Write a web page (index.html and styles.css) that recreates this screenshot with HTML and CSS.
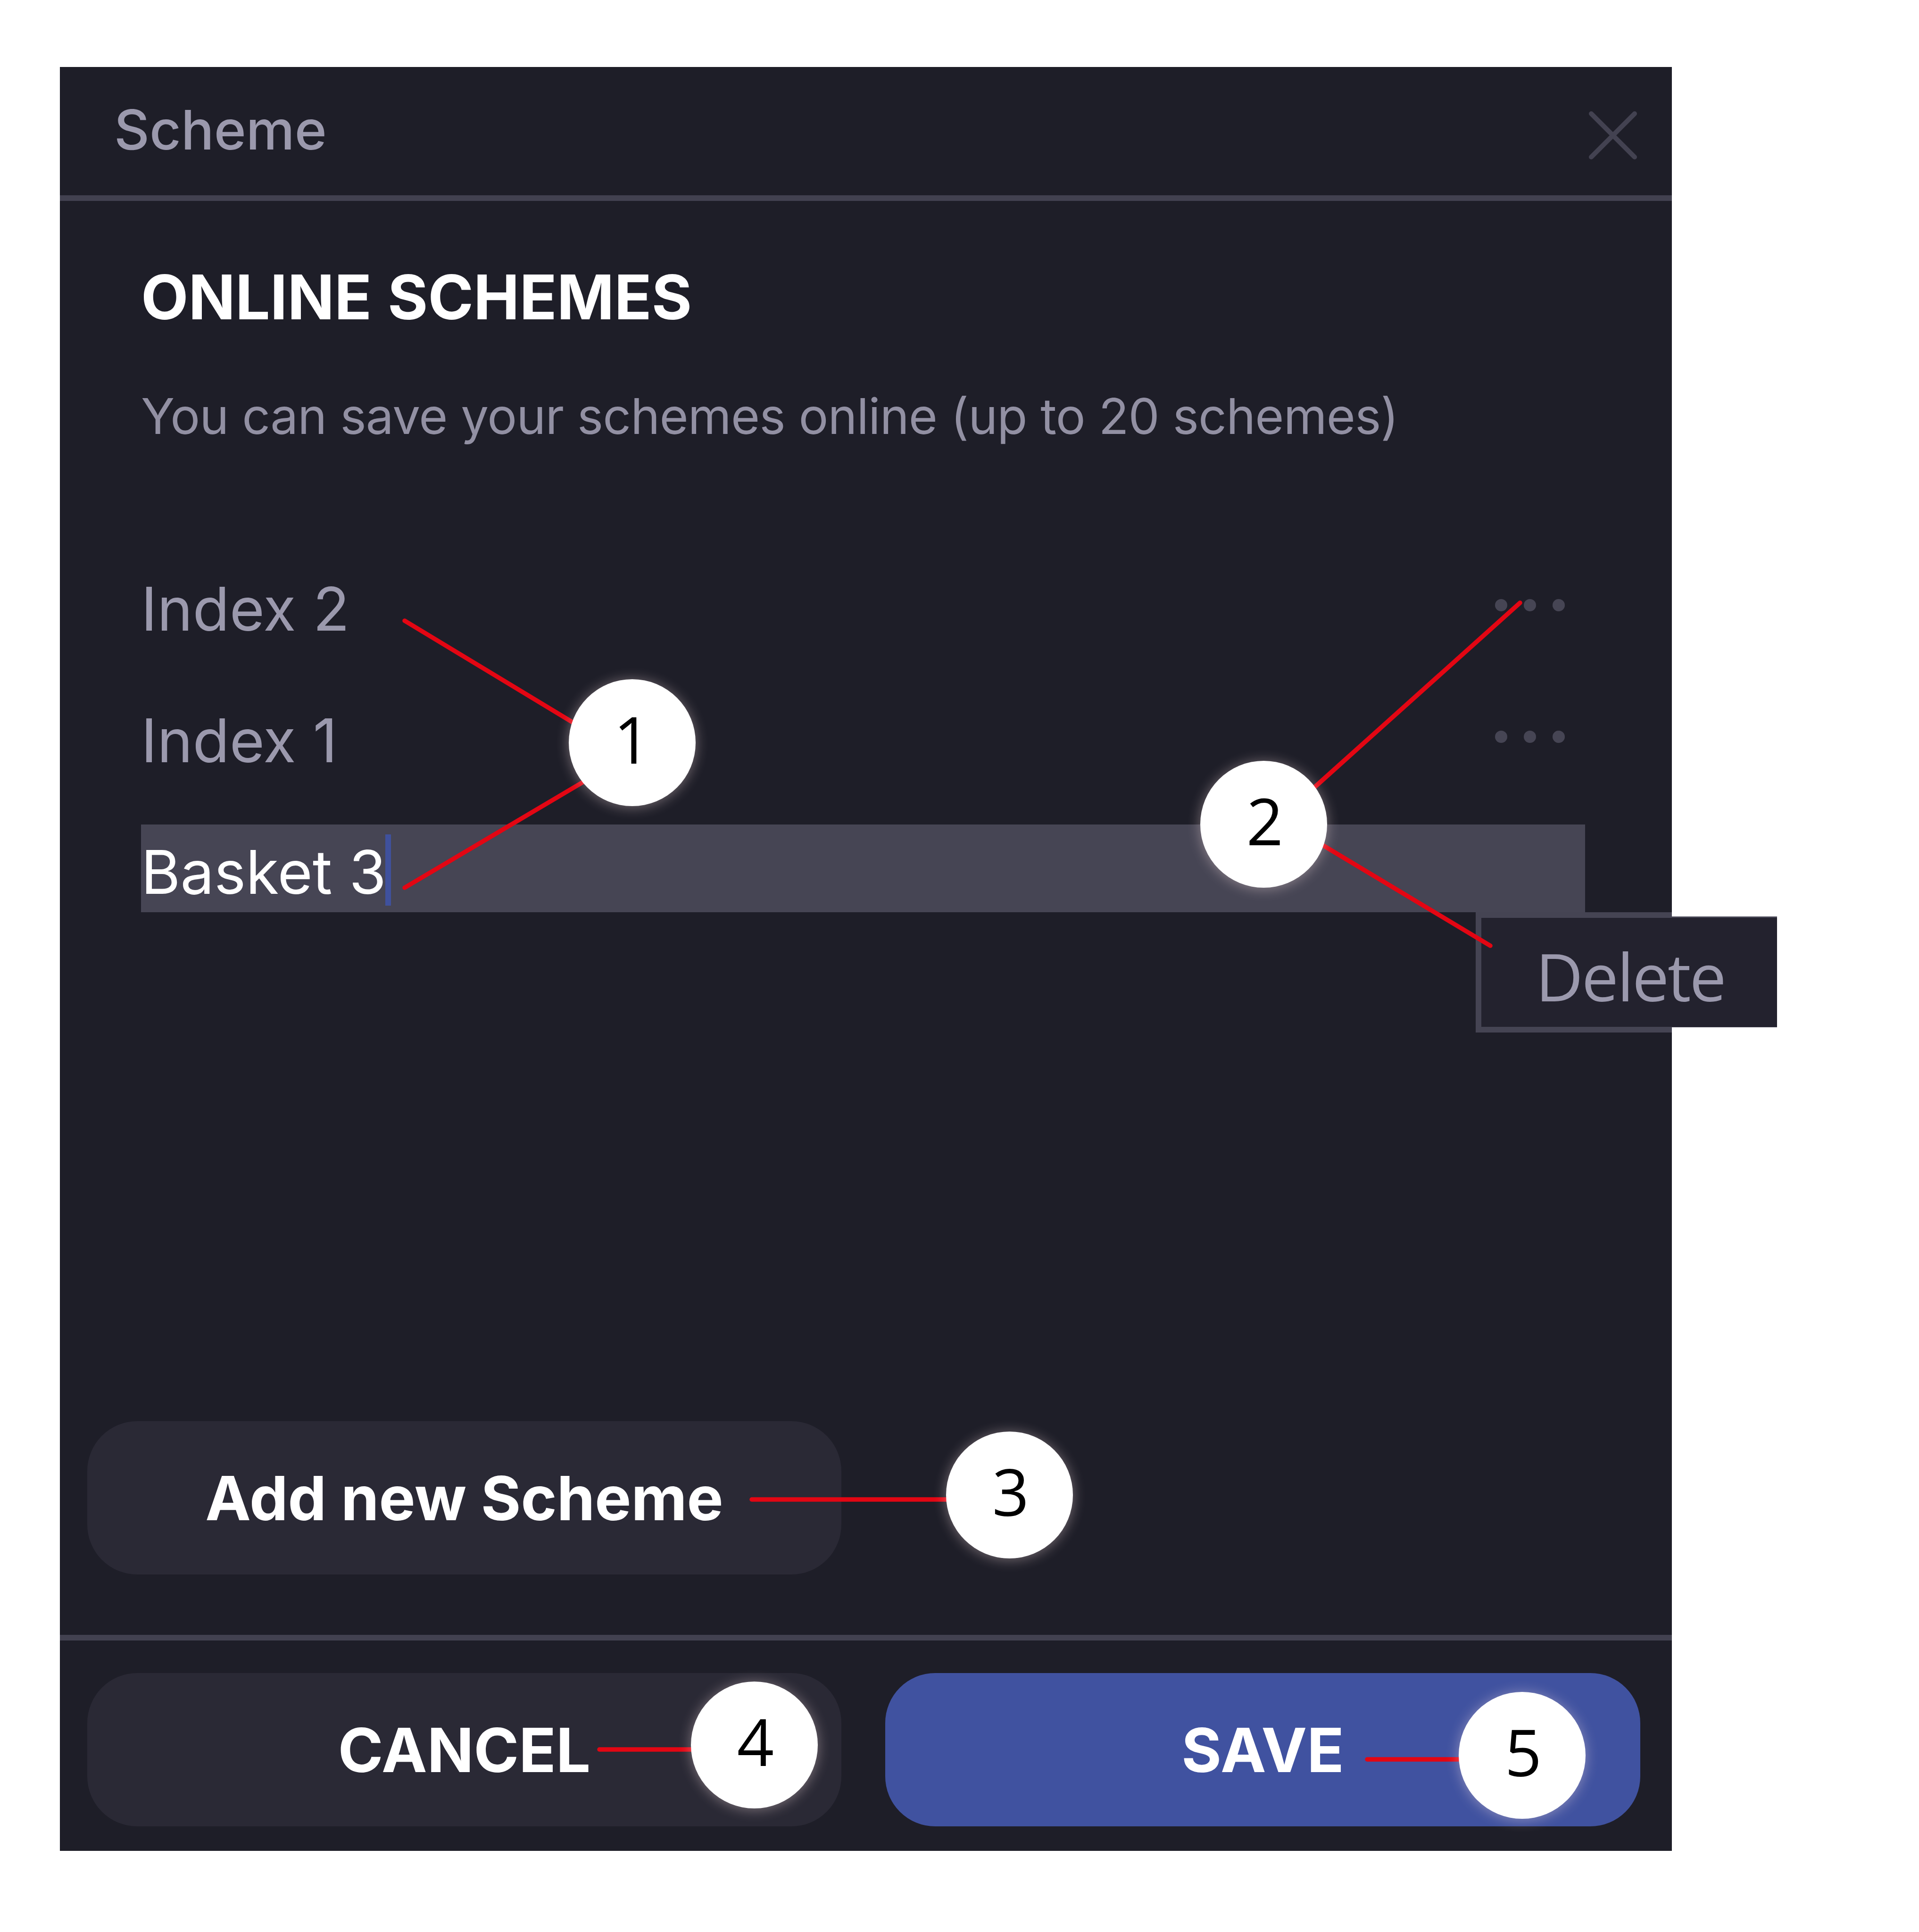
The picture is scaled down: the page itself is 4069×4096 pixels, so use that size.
FILE: index.html
```
<!DOCTYPE html>
<html lang="en">
<head>
    <meta charset="UTF-8">
    <meta name="viewport" content="width=device-width, initial-scale=1.0">
    <title>Scheme</title>
    <link rel="stylesheet" href="styles.css">
</head>
<body>
    <div class="dialog">
        <div class="dialog-header">
            <h1>Scheme</h1>
            <svg class="close" viewBox="0 0 106 106">
                <path d="M7 7 L99 99 M99 7 L7 99"/>
            </svg>
        </div>

        <div class="dialog-body">
            <h2>ONLINE SCHEMES</h2>
            <p class="hint">You can save your schemes online (up to 20 schemes)</p>

            <ul class="schemes">
                <li>
                    <span class="name">Index 2</span>
                    <span class="dots"><i></i><i></i><i></i></span>
                </li>
                <li>
                    <span class="name">Index 1</span>
                    <span class="dots"><i></i><i></i><i></i></span>
                </li>
                <li class="editing">
                    <span class="name">Basket 3</span>
                    <span class="caret"></span>
                    <div class="menu">Delete</div>
                </li>
            </ul>

            <button class="btn add">Add new Scheme</button>
        </div>

        <div class="dialog-footer">
            <button class="btn">CANCEL</button>
            <button class="btn save">SAVE</button>
        </div>
    </div>

    <!-- callouts -->
    <svg class="lines" viewBox="0 0 4069 4096">
        <path d="M858 1316 L1250 1553"/>
        <path d="M858 1882 L1270 1638"/>
        <path d="M3223 1278 L2755 1698"/>
        <path d="M3160 2005 L2770 1771"/>
        <path d="M1594 3179 H2060"/>
        <path d="M1271 3709 H1520"/>
        <path d="M2899 3730 H3150"/>
    </svg>
    <span class="badge one">1</span>
    <span class="badge two">2</span>
    <span class="badge three">3</span>
    <span class="badge four">4</span>
    <span class="badge five">5</span>
</body>
</html>
```
FILE: styles.css
```
* {
    box-sizing: border-box;
}
body {
    position: relative;
    width: 4069px;
    height: 4096px;
    margin: 0;
    padding: 142px 0 0 127px;
    overflow: hidden;
    background-color: #fff;
    font-family: Inter, sans-serif;
}
.dialog {
    display: flex;
    flex-direction: column;
    width: 3418px;
    height: 3782px;
    background-color: #1e1e28;
    color: #9b99ad;
}

/* header */
.dialog-header {
    display: flex;
    justify-content: space-between;
    align-items: center;
    height: 284px;
    padding: 0 72px 0 115px;
    border-bottom: 12px solid #424150;
}
.dialog-header h1 {
    margin: 0 0 6px;
    font-size: 116px;
    font-weight: 500;
    line-height: 140px;
}
.close {
    width: 106px;
    height: 106px;
    margin-top: 17px;
    fill: none;
    stroke: #434251;
    stroke-width: 10;
    stroke-linecap: round;
}

/* body */
.dialog-body {
    display: flex;
    flex: 1;
    flex-direction: column;
    padding: 125px 184px 128px 172px;
}
.dialog-body h2 {
    margin: 0 0 110px;
    color: #fff;
    font-size: 130.5px;
    font-weight: 700;
    line-height: 158px;
    word-spacing: 3px;
}
.hint {
    margin: 0;
    color: #9290a3;
    font-size: 105px;
    letter-spacing: -0.9px;
    line-height: 126px;
    white-space: nowrap;
}
.schemes {
    display: flex;
    flex-direction: column;
    gap: 93px;
    margin: 245px 0 0;
    padding: 0;
    list-style: none;
}
.schemes li {
    position: relative;
    display: flex;
    align-items: center;
    height: 186px;
}
.name {
    padding-top: 15px;
    font-size: 127.5px;
    line-height: 160px;
}
.dots {
    display: flex;
    gap: 35px;
    margin-left: auto;
    padding-right: 43px;
}
.dots i {
    width: 26px;
    height: 26px;
    border-radius: 50%;
    background-color: #464554;
}
.schemes .editing {
    background-color: #464554;
    color: #fff;
}
.caret {
    width: 12px;
    height: 151px;
    margin: 7px 0 0 -2px;
    background-color: #3f519d;
}
.menu {
    position: absolute;
    top: 100%;
    left: 2830px;
    width: 639px;
    height: 255px;
    padding: 19px 0 0 115px;
    border: 12px solid #454453;
    border-right: none;
    background-color: #23222e;
    color: #9b99ad;
    font-family: "Open Sans", sans-serif;
    font-size: 139px;
    letter-spacing: -3px;
    line-height: 208px;
    clip-path: polygon(0 0, 416px 0, 416px 9px, 639px 9px, 639px 244px, 416px 244px, 416px 255px, 0 255px);
}

/* buttons */
.btn {
    width: 1599px;
    height: 325px;
    padding: 0;
    border: none;
    border-radius: 106px;
    background-color: #2a2935;
    color: #fff;
    font-family: Inter, sans-serif;
    font-size: 129.5px;
    font-weight: 700;
}
.add {
    margin: auto 0 0 -114px;
}
.dialog-footer {
    display: flex;
    gap: 93px;
    height: 458px;
    padding: 69px 0 0 58px;
    border-top: 12px solid #424150;
}
.save {
    width: 1601px;
    background-color: #4052a0;
}

/* callouts */
.lines {
    position: absolute;
    top: 0;
    left: 0;
    width: 4069px;
    height: 4096px;
    fill: none;
    stroke: #e30613;
    stroke-width: 9.5;
    stroke-linecap: round;
}
.badge {
    position: absolute;
    width: 269px;
    height: 269px;
    padding-left: 5px;
    border-radius: 50%;
    background-color: #fff;
    box-shadow: 0 2px 28px rgba(255, 230, 230, 0.4);
    color: #000;
    font-family: "Open Sans", sans-serif;
    font-size: 137px;
    font-weight: 500;
    line-height: 252px;
    text-align: center;
}
.one {
    top: 1440px;
    left: 1206px;
    padding-left: 0;
}
.two {
    top: 1613px;
    left: 2545px;
}
.three {
    top: 3035px;
    left: 2006px;
}
.four {
    top: 3565px;
    left: 1465px;
}
.five {
    top: 3587px;
    left: 3093px;
}
```
